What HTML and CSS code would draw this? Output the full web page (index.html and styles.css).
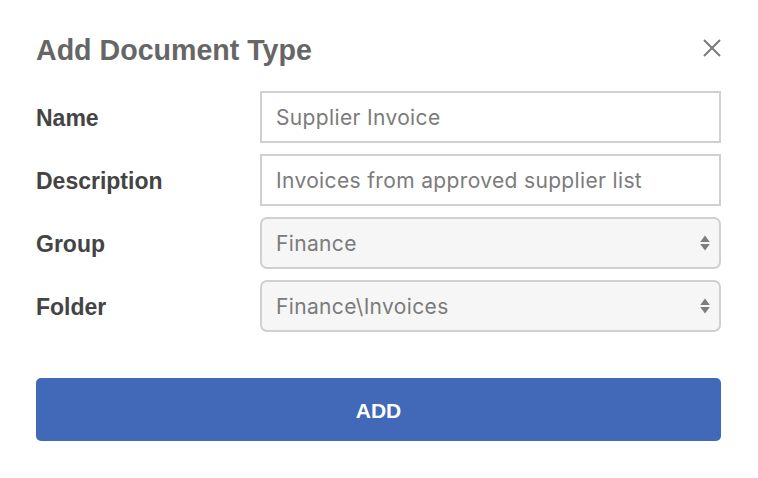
FILE: index.html
```html
<!DOCTYPE html>
<html>
<head>
<meta charset="utf-8">
<link rel="stylesheet" href="styles.css">
</head>
<body>
<div class="dialog">
  <div class="header">
    <h1 class="title">Add Document Type</h1>
    <button class="close" aria-label="Close">
      <svg width="18" height="18" viewBox="0 0 18 18"><path d="M1 1L17 17M17 1L1 17" stroke="#7a7a7a" stroke-width="2" fill="none"/></svg>
    </button>
  </div>
  <div class="form">
    <div class="label">Name</div>
    <div class="field input">Supplier Invoice</div>
    <div class="label">Description</div>
    <div class="field input">Invoices from approved supplier list</div>
    <div class="label">Group</div>
    <div class="field select"><span>Finance</span>
      <svg class="arrows" width="10" height="16" viewBox="0 0 10 16"><path d="M5 0.5L9.8 7H0.2Z M5 15.5L9.8 9H0.2Z" fill="#7d7d7d"/></svg>
    </div>
    <div class="label">Folder</div>
    <div class="field select"><span>Finance\Invoices</span>
      <svg class="arrows" width="10" height="16" viewBox="0 0 10 16"><path d="M5 0.5L9.8 7H0.2Z M5 15.5L9.8 9H0.2Z" fill="#7d7d7d"/></svg>
    </div>
  </div>
  <button class="add">ADD</button>
</div>
</body>
</html>
```
FILE: styles.css
```css
html, body {
  margin: 0;
  padding: 0;
  background: #fff;
}
.dialog {
  padding: 30px 37px 0 36px;
  font-family: "Liberation Sans", Arial, sans-serif;
}
.header {
  display: flex;
  justify-content: space-between;
  align-items: center;
  height: 40px;
}
.title {
  margin: 0;
  font-size: 28.6px;
  font-weight: bold;
  color: #666;
  line-height: 40px;
}
.close {
  border: 0;
  background: none;
  padding: 0;
  margin-right: 0;
  margin-top: -4px;
  width: 18px;
  height: 18px;
  display: flex;
}
.form {
  margin-top: 21px;
  display: grid;
  grid-template-columns: 224px 1fr;
  grid-auto-rows: 52px;
  row-gap: 11px;
  align-items: center;
}
.label {
  font-size: 23px;
  font-weight: bold;
  color: #444;
  padding-top: 2px;
}
.field {
  height: 52px;
  box-sizing: border-box;
  border: 2px solid #d0d0d0;
  display: flex;
  align-items: center;
  padding: 0 14px;
  font-family: Inter, "Liberation Sans", sans-serif;
  font-size: 21px;
  letter-spacing: 0.35px;
  color: #7b7b7b;
}
.select {
  background: #f6f6f6;
  border-radius: 7px;
  justify-content: space-between;
  padding-right: 9px;
}
.arrows {
  display: block;
}
.add {
  margin-top: 46px;
  width: 100%;
  height: 63px;
  border: 0;
  border-radius: 5px;
  background: #4169b8;
  color: #fff;
  font-family: "Liberation Sans", Arial, sans-serif;
  font-size: 21px;
  font-weight: bold;
  padding-top: 3px;
  display: block;
}
```
